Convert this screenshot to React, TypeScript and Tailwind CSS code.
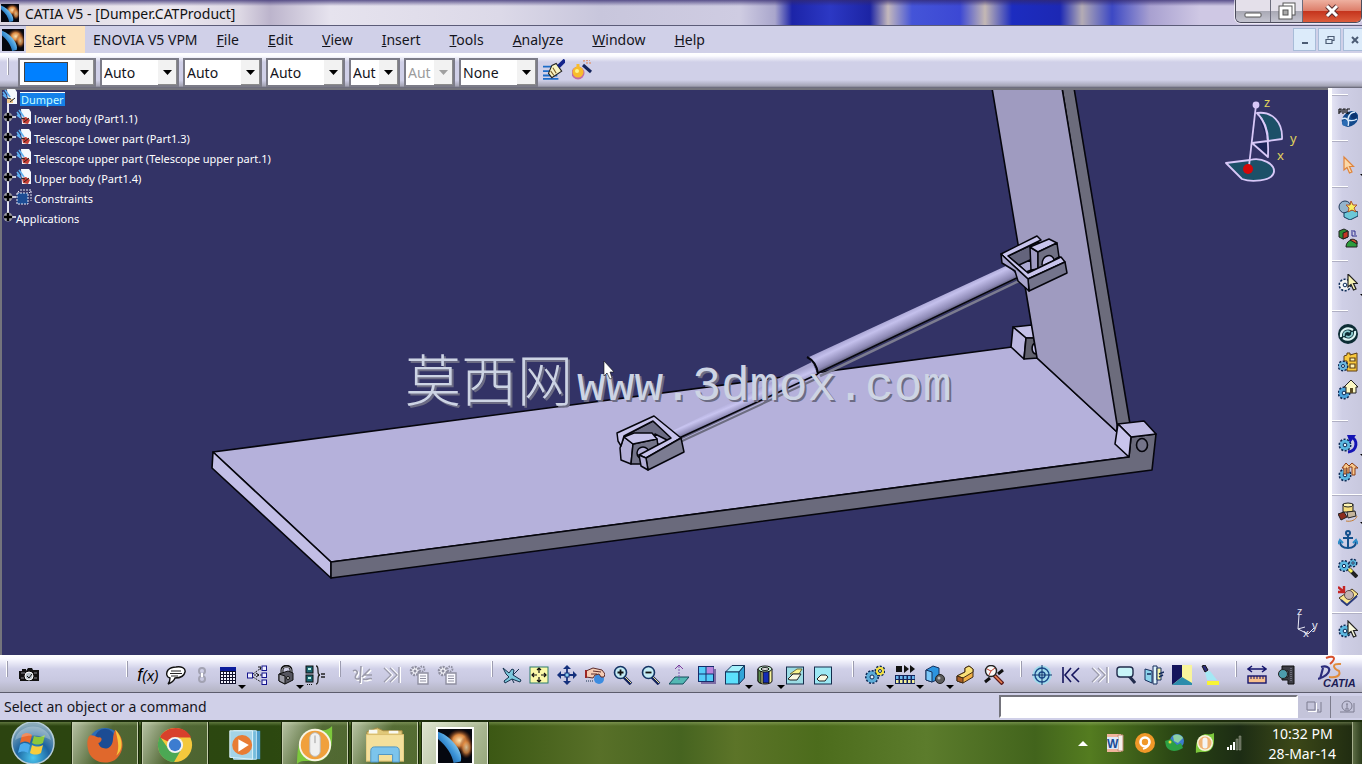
import React from "react";

interface IconProps {
    name: string;
    size?: number;
}

// All toolbar glyphs share a 20x20 grid
const gear = (cx: number, cy: number, r: number, fill: string) => (
    <g>
        <circle cx={cx} cy={cy} r={r} fill={fill} stroke="#0c2a55" strokeWidth="2" strokeDasharray="2 1.4" />
        <circle cx={cx} cy={cy} r={r - 0.5} fill={fill} />
        <circle cx={cx} cy={cy} r={r / 3} fill="#e8f4ff" stroke="#0c2a55" strokeWidth="1" />
    </g>
);

const pointer = (x: number, y: number, fill: string, stroke: string) => (
    <path
        transform={`translate(${x} ${y})`}
        d="M0 0V13L3 10.5L5.5 16L8 15L5.5 9.5H9.5Z"
        fill={fill}
        stroke={stroke}
        strokeWidth="1.2"
    />
);

const ICONS: Record<string, React.ReactNode> = {
    camera: (
        <g>
            <path d="M0 6H3V4H7V6L9 3H13L14 5H20V16H1V14H0Z" fill="#111" />
            <path d="M2 8H6M15 8H18M2 13H5M15 13H18" stroke="#8a8a92" />
            <circle cx="10" cy="11" r="4" fill="#b9c4cc" stroke="#fff" />
            <path d="M8 11L10 13L13 9" stroke="#111" fill="none" />
        </g>
    ),
    bubble: (
        <g>
            <path d="M10 2C15 1 20 3 19 7C18 12 12 13 9 13C8 16 5 18 2 19C4 17 4 15 4 13C0 12 0 8 2 5C4 3 7 2 10 2Z" fill="#fff" stroke="#111" strokeWidth="1.4" />
            <path d="M5 6H15M4 8.5H16M5 11H12" stroke="#222" />
        </g>
    ),
    chain: (
        <g fill="none" stroke="#a2a2b2" strokeWidth="2">
            <circle cx="10" cy="6" r="3" />
            <circle cx="10" cy="14" r="3" />
            <path d="M10 8V12" stroke="#fff" />
        </g>
    ),
    table: (
        <g>
            <rect x="2" y="2" width="16" height="17" fill="#10102a" />
            <rect x="2" y="2" width="16" height="4" fill="#0c1c9c" />
            {[3, 6, 9, 12, 15].map((x) =>
                [7, 10, 13, 16].map((y) => <rect key={`${x}-${y}`} x={x} y={y} width="2" height="2" fill="#f4f4ff" />)
            )}
        </g>
    ),
    tree: (
        <g fill="#eef" stroke="#14148c">
            <path d="M4 10H15M6 9L14 3M6 12L14 17" stroke="#222" strokeDasharray="2 1" />
            <path d="M11 2L14 2L13 5M9 8L12 10L9 12" stroke="#111" fill="none" />
            <rect x="0.5" y="8" width="5" height="5" />
            <rect x="15" y="1" width="4.5" height="4.5" />
            <rect x="15" y="8" width="4.5" height="4.5" />
            <rect x="15" y="15" width="4.5" height="4.5" />
        </g>
    ),
    lock: (
        <g stroke="#111">
            <path d="M6 9V5C6 0 15 0 15 5V10" fill="none" strokeWidth="3" />
            <path d="M6 9V5C6 1 15 1 15 5V10" fill="none" stroke="#b9b9c3" />
            <path d="M3 9L12 6L17 8V15L9 19L3 16Z" fill="#55555f" />
            <path d="M3 9L9 11V19L3 16Z" fill="#9b9ba6" />
            <circle cx="12" cy="13" r="1.5" fill="#ccc" />
        </g>
    ),
    formula: (
        <g>
            <rect x="1" y="1" width="7" height="7" fill="#1c6470" stroke="#111" />
            <rect x="1" y="10" width="7" height="7" fill="#1c6470" stroke="#111" />
            <path d="M3 4H6M3 13H6" stroke="#b9f0e4" strokeWidth="2" />
            <path d="M2 19.5H8" stroke="#111" strokeDasharray="1 1" />
            <path d="M11 1C15 1 11 10 15 10C11 10 15 19 11 19M16 9H20M16 12H20" fill="none" stroke="#222" strokeWidth="1.3" />
        </g>
    ),
    cut: (
        <g fill="none">
            <path d="M2 7C5 5 8 8 5 11C3 15 6 16 9 14M10 2L9 19M11 13L19 5M12 15C16 17 18 13 21 15" stroke="#fff" strokeWidth="2" />
            <path d="M1 6C4 4 7 7 4 10C2 14 5 15 8 13M9 1L8 18M10 12L18 4M11 14C15 16 17 12 20 14M12 10H20" stroke="#9a9aaa" strokeWidth="1.6" />
        </g>
    ),
    stepEndOff: (
        <g fill="none">
            <path d="M4 3L11 10L4 17M10 3L17 10L10 17M19 2V18" stroke="#fff" strokeWidth="2" />
            <path d="M3 3L10 10L3 17M9 3L16 10L9 17M18 2V18" stroke="#9a9aac" strokeWidth="1.4" />
        </g>
    ),
    stepStart: (
        <path d="M2 2V18M10 3L4 10L10 17M18 3L11 10L18 17" fill="none" stroke="#14145c" strokeWidth="1.6" />
    ),
    ghost: (
        <g>
            <circle cx="6" cy="6" r="4" fill="#f4f4fa" stroke="#8f8fa0" strokeWidth="2.5" strokeDasharray="2 1" />
            <circle cx="6" cy="6" r="1.5" fill="#8f8fa0" />
            <circle cx="13" cy="4" r="2.5" fill="none" stroke="#8f8fa0" strokeWidth="1.8" strokeDasharray="1.5 1" />
            <path d="M9 8H19V19H9Z" fill="#fafaff" stroke="#8f8fa0" strokeWidth="1.4" />
            <path d="M11 11H17M11 13.5H17M11 16H17" stroke="#8f8fa0" />
        </g>
    ),
    plane: (
        <g>
            <path d="M1 3L7 8L10 4L12 5L11 10L19 15L18 17L10 14L3 18L2 16L7 12L4 9Z" fill="#7cc8dc" stroke="#14304c" />
            <path d="M11 10L17 4M10 14L12 18" stroke="#14304c" />
        </g>
    ),
    fit: (
        <g>
            <rect x="1" y="2" width="18" height="16" fill="#fbf9a8" stroke="#2c7c6c" />
            <path d="M10 3V8M10 12V17M3 10H8M12 10H17M8 5L10 3L12 5M8 15L10 17L12 15M5 8L3 10L5 12M15 8L17 10L15 12" stroke="#111" fill="none" strokeWidth="1.2" />
        </g>
    ),
    pan: (
        <g fill="#14307c">
            <path d="M10 0L14 4H6ZM10 20L14 16H6ZM0 10L4 6V14ZM20 10L16 6V14Z" />
            <path d="M10 3V17M3 10H17" stroke="#14307c" strokeWidth="1.8" />
            <rect x="8" y="8" width="4" height="4" fill="#8cd0f0" stroke="#14307c" />
        </g>
    ),
    rotate: (
        <g>
            <circle cx="14" cy="14" r="5" fill="#3c8ce0" />
            <path d="M1 6L8 3L17 5L20 9L19 12L16 12L14 9L10 10L8 13L1 12Z" fill="#f5ccb4" stroke="#5c2c2c" />
            <path d="M8 6L16 7M6 9L12 9" stroke="#5c2c2c" />
            <path d="M1 5V13" stroke="#9c2424" strokeWidth="2" />
            <path d="M1 16H8" stroke="#14304c" strokeDasharray="1 1" />
        </g>
    ),
    zoomIn: (
        <g>
            <path d="M11 12L18 19" stroke="#14245c" strokeWidth="3.5" />
            <path d="M12 12L18 18" stroke="#f0e08c" strokeWidth="1" />
            <circle cx="7.5" cy="7.5" r="6" fill="#c4ecf4" stroke="#143464" strokeWidth="1.6" />
            <path d="M4.5 7.5H10.5M7.5 4.5V10.5" stroke="#111" strokeWidth="1.8" />
        </g>
    ),
    zoomOut: (
        <g>
            <path d="M11 12L18 19" stroke="#14245c" strokeWidth="3.5" />
            <path d="M12 12L18 18" stroke="#f0e08c" strokeWidth="1" />
            <circle cx="7.5" cy="7.5" r="6" fill="#c4ecf4" stroke="#143464" strokeWidth="1.6" />
            <path d="M4.5 7.5H10.5" stroke="#111" strokeWidth="1.8" />
        </g>
    ),
    normal: (
        <g>
            <path d="M6 12H20L14 19H0Z" fill="#54b8b4" stroke="#144c5c" />
            <path d="M10 15V1" stroke="#7c5cb0" strokeDasharray="2 1" />
            <path d="M6 4L10 0L14 4" stroke="#7c3c9c" fill="none" />
        </g>
    ),
    multi: (
        <g>
            <rect x="4" y="4" width="15" height="15" fill="#7c6ca4" />
            <rect x="1.5" y="1.5" width="15" height="15" fill="#54ccf8" stroke="#142c6c" />
            <rect x="9.5" y="2" width="7" height="7" fill="#b884dc" />
            <path d="M9 1.5V16.5M1.5 9H16.5" stroke="#142c6c" />
        </g>
    ),
    cube: (
        <g stroke="#14345c">
            <path d="M0.5 7L7 0.5H19.5L14 7Z" fill="#a4f0fc" />
            <rect x="0.5" y="7" width="13.5" height="12" fill="#5ce0fc" />
            <path d="M14 7L19.5 0.5V13L14 19Z" fill="#30a4d8" />
        </g>
    ),
    cylinder: (
        <g stroke="#111">
            <path d="M3 4V16C3 20 17 20 17 16V4Z" fill="#f8f49c" />
            <path d="M8 6H14V18H8Z" fill="#142cb4" />
            <path d="M3 4V16C4 18 6 18 6 18V5Z" fill="#5c8c4c" />
            <ellipse cx="10" cy="4" rx="7" ry="3" fill="#c4f0d4" />
            <ellipse cx="10" cy="4" rx="4" ry="1.4" fill="#fff" />
        </g>
    ),
    hide: (
        <g>
            <rect x="1.5" y="2" width="17" height="17" fill="#9cdce4" stroke="#142c4c" />
            <path d="M5 9L12 4H17L14 9Z" fill="#f8f48c" stroke="#6c6c3c" />
            <path d="M3 14L8 9H16L12 15H5Z" fill="#f8f8e0" stroke="#222" />
        </g>
    ),
    swap: (
        <g>
            <rect x="1.5" y="2" width="17" height="17" fill="#9ce8f4" stroke="#142c4c" />
            <path d="M4 14L8 10H13L15 12L12 16H6Z" fill="#f8f8e0" stroke="#222" />
        </g>
    ),
    gears: (
        <g>
            {gear(7, 12, 6, "#5cacd8")}
            {gear(15, 6, 4.5, "#f4e044")}
        </g>
    ),
    player: (
        <g fill="#111">
            <rect x="1" y="1" width="6" height="6" />
            <path d="M9 0L14 4L9 8ZM15 0L20 4L15 8Z" />
            <rect x="0" y="10" width="20" height="9" fill="#14245c" />
            {[1, 5, 9, 13, 17].map((x) => (
                <g key={x}>
                    <rect x={x} y="11" width="2.5" height="3" fill="#6cb8f0" />
                    <rect x={x} y="15" width="2.5" height="3" fill="#f4f09c" />
                </g>
            ))}
        </g>
    ),
    boxes: (
        <g stroke="#14305c">
            <path d="M1 5L8 1L14 3V14L7 17L1 15Z" fill="#2c94e0" />
            <path d="M1 5L7 7V17L1 15Z" fill="#7cc8f8" />
            <circle cx="15" cy="14" r="4.5" fill="#5c5c5c" stroke="#222" />
            <circle cx="14" cy="13" r="1.5" fill="#bbb" stroke="none" />
        </g>
    ),
    clip: (
        <g stroke="#422c14">
            <path d="M2 11L10 7V3L14 1L18 4V12L8 18L2 16Z" fill="#f0b048" />
            <path d="M2 11L8 13L18 7V4L14 1L10 3V7Z" fill="#f8e078" />
            <path d="M8 13V18L2 16V11Z" fill="#a85c24" />
        </g>
    ),
    clash: (
        <g>
            <path d="M9 9L19 19" stroke="#5c1c1c" strokeWidth="4" />
            <path d="M10 10L18 18" stroke="#f08454" strokeWidth="1.6" />
            <circle cx="7" cy="6" r="5.5" fill="#f8f8f8" stroke="#222" strokeWidth="1.4" />
            <path d="M3 4L7 6L11 3M5 10L7 6" stroke="#c43c2c" fill="none" />
            <path d="M14 9L19 5M1 17L6 13" stroke="#111" strokeWidth="3" />
        </g>
    ),
    target: (
        <g fill="none">
            <circle cx="10" cy="10" r="9.5" fill="#a4dcec" />
            <circle cx="10" cy="10" r="7" stroke="#1c4c8c" strokeWidth="1.4" />
            <circle cx="10" cy="10" r="3" stroke="#1c4c8c" strokeWidth="1.4" />
            <path d="M10 0V20M0 10H20" stroke="#14346c" />
        </g>
    ),
    magnify: (
        <g>
            <path d="M13 11L19 18" stroke="#222c4c" strokeWidth="3" />
            <rect x="1" y="2" width="16" height="10" rx="3" fill="#c8f4f8" stroke="#222c4c" strokeWidth="1.4" />
        </g>
    ),
    book: (
        <g stroke="#142c5c">
            <path d="M1 4L8 6V18L1 15Z" fill="#8cd4ec" />
            <path d="M9 1H13V19H9Z" fill="#e0f4fc" />
            <path d="M13 3H17V15H13Z" fill="#f8f8a8" />
            <path d="M3 9H7M15 9L20 7M15 12L19 10" strokeWidth="1.6" />
        </g>
    ),
    room: (
        <g>
            <rect width="20" height="20" fill="#f8f49c" />
            <path d="M0 0H10V12L0 20Z" fill="#14145c" />
            <path d="M0 20L10 12L20 18V20Z" fill="#2c8cac" />
        </g>
    ),
    spot: (
        <g>
            <path d="M5 7L10 6L17 15H7Z" fill="#a4e8f4" />
            <path d="M2 1L5 0L8 5L5 7Z" fill="#2c2c7c" stroke="#111" />
            <rect x="7" y="16" width="12" height="4" fill="#f8f434" />
        </g>
    ),
    measure: (
        <g>
            <path d="M1 4H19M5 1L1 4L5 7M15 1L19 4L15 7" fill="none" stroke="#14146c" strokeWidth="1.5" />
            <rect x="1" y="11" width="18" height="7" fill="#f8c08c" stroke="#14146c" strokeWidth="1.4" />
            <path d="M4 11V14M7 11V14M10 11V14M13 11V14M16 11V14" stroke="#14146c" />
        </g>
    ),
    caliper: (
        <g>
            <path d="M6 1H18V19H12V15H6V12H12V6H6Z" fill="#3c3c44" stroke="#111" />
            <circle cx="7" cy="9" r="4.5" fill="#4c9cac" stroke="#222" />
            <path d="M15 3V17" stroke="#9c9cac" strokeDasharray="1 1" />
        </g>
    ),
    knot: (
        <g>
            <ellipse cx="12" cy="11" rx="9" ry="7" transform="rotate(-40 12 11)" fill="#134a8c" />
            <circle cx="7" cy="15" r="3" fill="#2c6cb4" />
            <circle cx="16" cy="8" r="3" fill="#0c3470" />
            <path d="M4 11C8 9 12 12 10 18M10 11C11 6 14 4 17 4M10 12C13 13 16 13 19 11" fill="none" stroke="#dcecfc" strokeWidth="1.4" />
            <path d="M1 1V6M1 1H3V4H1M5 1V6M5 1H7V5M9 1V6M9 1H12M9 5H12" fill="none" stroke="#111" strokeWidth="1.2" />
        </g>
    ),
    arrow: pointer(6, 3, "#fbd8a8", "#e0843c"),
    newPart: (
        <g>
            <circle cx="7" cy="7" r="6" fill="#94b4cc" stroke="#243c5c" />
            <path d="M6 13L14 10L20 12V16L12 20L6 17Z" fill="#6cc8d8" stroke="#143c5c" />
            <path d="M13 1L15 5L19 5L16 8L18 12L14 10L10 12L11 8L8 5L12 5Z" fill="#f8f060" stroke="#b0542c" />
        </g>
    ),
    replace: (
        <g stroke="#222">
            <path d="M1 3L6 1L10 3V9L5 11L1 9Z" fill="#2c8c34" />
            <path d="M5 5L10 3V9L5 11Z" fill="#c43424" />
            <path d="M8 19C8 13 14 10 19 13V19Z" fill="#2c9c3c" />
            <path d="M12 12C15 10 19 12 19 16Z" fill="#d8502c" />
            <path d="M13 3H17V7M19 8H14V4" stroke="#2c2c8c" fill="none" />
        </g>
    ),
    gearPointer: (
        <g>
            {gear(7, 11, 5.5, "#f4f4f4")}
            {pointer(10, 0, "#f8f4b4", "#222")}
        </g>
    ),
    gearPointerBlue: (
        <g>
            {gear(7, 11, 5.5, "#5cb8e0")}
            {pointer(10, 1, "#f8f8dc", "#222")}
        </g>
    ),
    swirl: (
        <g fill="none">
            <circle cx="10" cy="10" r="10" fill="#0c2c34" />
            <path d="M3 13C2 6 9 2 15 6" stroke="#dcf4f4" strokeWidth="2.2" />
            <path d="M17 7C18 14 11 18 5 14" stroke="#dcf4f4" strokeWidth="2.2" />
            <path d="M6 12C5 8 9 6 12 8M14 8C15 12 11 14 8 12" stroke="#8cccd0" strokeWidth="1.8" />
        </g>
    ),
    catalog: (
        <g>
            <path d="M6 4L9 3V1H12V3L19 1V19H9V9H6Z" fill="#f8c83c" stroke="#5c3c14" />
            <path d="M12 6H17V9H12ZM12 12H17V16H12Z" fill="#fff4b4" stroke="#5c3c14" strokeWidth="1.2" />
            {gear(5, 14, 4.5, "#6cb8e0")}
        </g>
    ),
    home: (
        <g>
            {gear(6, 13, 5.5, "#4ca4dc")}
            <path d="M6 7L13 0L20 7H18V13H8V7Z" fill="#fcf8c4" stroke="#222" />
            <rect x="12" y="8" width="3" height="5" fill="#5c4c24" />
        </g>
    ),
    gearTurn: (
        <g>
            {gear(7, 11, 5.5, "#5cb8e0")}
            <path d="M13 3C20 5 20 17 10 18" fill="none" stroke="#1414b4" strokeWidth="3" />
            <path d="M9 1H18L12 9Z" fill="#1414b4" />
        </g>
    ),
    gearMove: (
        <g>
            {gear(7, 13, 5.5, "#5cb8e0")}
            <path d="M6 12V6H4L8 1L11 4L14 1L20 6H17V13H14V5H11V11H9V6H8V12Z" fill="#f8c88c" stroke="#8c3c14" />
        </g>
    ),
    coincide: (
        <g stroke="#222">
            <path d="M5 2H15V10H5Z" fill="#f4dc7c" />
            <ellipse cx="10" cy="3" rx="5" ry="2" fill="#fcf4b4" />
            <path d="M0 12L6 10L9 15L3 18Z" fill="#8c2c1c" />
            <path d="M9 10L17 9L18 14L10 16Z" fill="#c4b49c" />
            <path d="M8 19C13 20 18 18 19 14" fill="none" stroke="#c47c34" />
        </g>
    ),
    anchor: (
        <g fill="none" stroke="#14508c" strokeWidth="2">
            <circle cx="10" cy="3" r="2" />
            <path d="M10 5V18M5 8H15M2 11C2 17 7 18 10 18C13 18 18 17 18 11" />
            <path d="M0 14L2 10L5 13M15 13L18 10L20 14" stroke="#2c8cc8" />
        </g>
    ),
    gearWand: (
        <g>
            {gear(6, 8, 5, "#5cb8e0")}
            {gear(15, 5, 3.5, "#5cb8e0")}
            <path d="M11 11L19 19" stroke="#222" strokeWidth="4" />
            <path d="M11 11L14 14" stroke="#f8f45c" strokeWidth="3" />
        </g>
    ),
    reuse: (
        <g>
            <path d="M1 12L14 3L20 8L9 19Z" fill="#f8e48c" stroke="#4c3c1c" />
            <path d="M3 14L9 19L19 10" stroke="#2c3c7c" fill="none" strokeWidth="2" />
            <circle cx="11" cy="9" r="4.5" fill="#c4b4b4" stroke="#5c4c4c" />
            <path d="M0 1L6 6M6 0V6H0" stroke="#c42424" strokeWidth="2.4" fill="none" />
        </g>
    ),
    painter: (
        <g>
            <path d="M0 7H8M0 11H7M0 15H13M0 18H14" stroke="#1c6cc8" strokeWidth="1.6" />
            <path d="M8 6L12 4L17 11L8 17L5 13Z" fill="#f8f4c4" stroke="#222" />
            <path d="M9 8L12 13M7 11L10 15" stroke="#7c5c24" />
            <path d="M14 7L20 1" stroke="#14248c" strokeWidth="3.5" />
        </g>
    ),
    wizard: (
        <g>
            <circle cx="6" cy="13" r="6.5" fill="#c46ca4" />
            <circle cx="6" cy="12" r="5.5" fill="#f8bc2c" />
            <path d="M6 4V10" stroke="#f8bc2c" strokeWidth="3" />
            <circle cx="5" cy="11" r="2" fill="#fcf48c" />
            <path d="M11 5L19 12" stroke="#14245c" strokeWidth="3" />
            <path d="M11 1L18 0M14 3H19" stroke="#e09c7c" strokeDasharray="2 1" strokeWidth="1.5" />
        </g>
    ),
};

const Icon: React.FC<IconProps> = ({ name, size = 20 }) => (
    <svg viewBox="0 0 20 20" width={size} height={size} aria-hidden="true" className="shrink-0">
        {ICONS[name]}
    </svg>
);

const CatiaIcon: React.FC<{ className: string }> = ({ className }) => (
    <svg viewBox="0 0 24 24" className={className} aria-hidden="true">
        <defs>
            <linearGradient id="comet" x1="0" y1="1" x2="1" y2="0">
                <stop offset="0.1" stopColor="#0c3c78" />
                <stop offset="0.5" stopColor="#3c94d8" />
                <stop offset="0.8" stopColor="#a4dcf4" />
            </linearGradient>
            <radialGradient id="flare">
                <stop offset="0" stopColor="#fce4b4" />
                <stop offset="0.5" stopColor="#dc8840" />
                <stop offset="1" stopColor="#6c280c" stopOpacity="0" />
            </radialGradient>
        </defs>
        <rect width="24" height="24" fill="#05070f" />
        <ellipse cx="15" cy="8" rx="9" ry="8" fill="url(#flare)" />
        <ellipse cx="20" cy="13" rx="5" ry="8" fill="url(#flare)" opacity="0.8" />
        <path d="M0 2C6 4 10 8 13 12C16 16 17 20 16 23L11 24C10 18 6 12 0 7Z" fill="url(#comet)" />
    </svg>
);

interface Tool {
    icon: string;
    label: string;
    width?: string;
    drop?: boolean;
}

interface ToolGroup {
    size: string;
    tools: Tool[];
}

const BOTTOM_GROUPS: ToolGroup[] = [
    { size: "w-[120px]", tools: [{ icon: "camera", label: "Capture", width: "w-[30px]" }] },
    {
        size: "w-[213px]",
        tools: [
            { icon: "fx", label: "Formula" },
            { icon: "bubble", label: "Comment", width: "w-7" },
            { icon: "chain", label: "Link", width: "w-6" },
            { icon: "table", label: "Design table", drop: true },
            { icon: "tree", label: "Relations", width: "w-[30px]" },
            { icon: "lock", label: "Lock", drop: true },
            { icon: "formula", label: "Equivalent dimensions", width: "w-[30px]" },
        ],
    },
    {
        size: "w-[152px]",
        tools: [
            { icon: "cut", label: "Cut link", width: "w-[30px]" },
            { icon: "stepEndOff", label: "Last" },
            { icon: "ghost", label: "Publish" },
            { icon: "ghost", label: "Publish all" },
        ],
    },
    {
        size: "w-[361px]",
        tools: [
            { icon: "plane", label: "Fly mode", width: "w-[26px]" },
            { icon: "fit", label: "Fit all in" },
            { icon: "pan", label: "Pan" },
            { icon: "rotate", label: "Rotate" },
            { icon: "zoomIn", label: "Zoom in" },
            { icon: "zoomOut", label: "Zoom out" },
            { icon: "normal", label: "Normal view" },
            { icon: "multi", label: "Multi-view" },
            { icon: "cube", label: "Isometric view", drop: true },
            { icon: "cylinder", label: "Shading", width: "w-8", drop: true },
            { icon: "hide", label: "Hide/Show" },
            { icon: "swap", label: "Swap visible space" },
        ],
    },
    {
        size: "w-[168px]",
        tools: [
            { icon: "gears", label: "Simulation", width: "w-[30px]", drop: true },
            { icon: "player", label: "Player", width: "w-[30px]", drop: true },
            { icon: "boxes", label: "Scene", width: "w-[30px]", drop: true },
            { icon: "clip", label: "Sectioning", width: "w-[30px]" },
            { icon: "clash", label: "Clash" },
        ],
    },
    {
        size: "w-[215px]",
        tools: [
            { icon: "target", label: "Look at" },
            { icon: "stepStart", label: "Previous view", width: "w-[30px]" },
            { icon: "stepEndOff", label: "Next view", width: "w-[26px]" },
            { icon: "magnify", label: "Magnifier" },
            { icon: "book", label: "Depth effect" },
            { icon: "room", label: "Ground" },
            { icon: "spot", label: "Lighting" },
        ],
    },
    {
        size: "w-[80px]",
        tools: [
            { icon: "measure", label: "Measure between" },
            { icon: "caliper", label: "Measure item", width: "w-[30px]" },
        ],
    },
];

const SIDE_GROUPS: ToolGroup[] = [
    { size: "pb-2", tools: [{ icon: "knot", label: "Product structure" }] },
    { size: "pb-2", tools: [{ icon: "arrow", label: "Select", drop: true }] },
    {
        size: "pb-2",
        tools: [
            { icon: "newPart", label: "Generate numbering" },
            { icon: "replace", label: "Replace component" },
        ],
    },
    { size: "pb-3", tools: [{ icon: "gearPointer", label: "Manipulate", drop: true }] },
    {
        size: "pb-4",
        tools: [
            { icon: "swirl", label: "Update all" },
            { icon: "catalog", label: "Catalog browser" },
            { icon: "home", label: "Workbench" },
        ],
    },
    {
        size: "pb-2",
        tools: [
            { icon: "gearTurn", label: "Rotate component", drop: true },
            { icon: "gearMove", label: "Explode" },
        ],
    },
    {
        size: "pb-0.5",
        tools: [
            { icon: "coincide", label: "Coincidence", drop: true },
            { icon: "anchor", label: "Fix component" },
            { icon: "gearWand", label: "Quick constraint" },
            { icon: "reuse", label: "Reuse pattern" },
        ],
    },
    { size: "pb-0", tools: [{ icon: "gearPointerBlue", label: "Smart move" }] },
];

const ToolButton: React.FC<Tool> = ({ icon, label, width = "w-7", drop }) => (
    <button type="button" aria-label={label} className={`relative flex h-7 shrink-0 items-center justify-center ${width}`}>
        {icon === "fx" ? (
            <span className="font-['Liberation_Sans',sans-serif] text-lg italic leading-5 text-black">
                f<span className="text-sm">(x)</span>
            </span>
        ) : (
            <Icon name={icon} />
        )}
        {drop && (
            <svg viewBox="0 0 8 4" className="absolute -right-1 bottom-0 h-1 w-2" aria-hidden="true">
                <path d="M0 0H8L4 4Z" fill="#000" />
            </svg>
        )}
    </button>
);

const MENU = ["File", "Edit", "View", "Insert", "Tools", "Analyze", "Window", "Help"];

const COMBOS = [
    { label: "Line colour", value: "Auto", width: "w-[79px]", off: false },
    { label: "Transparency", value: "Auto", width: "w-[79px]", off: false },
    { label: "Line weight", value: "Auto", width: "w-[79px]", off: false },
    { label: "Line type", value: "Aut", width: "w-[51px]", off: false },
    { label: "Point symbol", value: "Aut", width: "w-[51px]", off: true },
    { label: "Layer", value: "None", width: "w-[79px]", off: false },
];

const ComboArrow: React.FC<{ off?: boolean }> = ({ off }) => (
    <span className="pointer-events-none absolute bottom-0 right-0 top-0 flex w-[19px] items-center justify-center border-b border-r border-[#8c8c8c] bg-[#f2f2f2]">
        <svg viewBox="0 0 9 5" className="h-[5px] w-[9px]" aria-hidden="true">
            <path d="M0 0H9L4.5 5Z" fill={off ? "#a0a0a0" : "#000"} />
        </svg>
    </span>
);

const TitleBar = () => (
    <header className="flex h-[26px] shrink-0 items-stretch border-b border-[#5c5c78] bg-[linear-gradient(180deg,rgba(50,40,110,0.75)_0,rgba(255,255,255,0)_6px),linear-gradient(90deg,#dcd6e0_0,#ece8f0_160px,#ddd8e4_240px,#bcb4cc_270px,#e6e3ee_330px,#dcd9e8_500px,#c8c6dc_600px,#cfcce2_740px,#a9a6cc_775px,#1c24a8_792px,#2c38c4_830px,#1c24a4_870px,#c4b8bc_888px,#4454d8_912px,#3c48d4_960px,#c4b8b4_985px,#1c2cc0_1012px,#1c28b4_1060px,#b4acb4_1082px,#3c48c4_1112px,#a8a0d0_1150px,#cfc8e4_1200px)]">
        <CatiaIcon className="ml-px mt-1 size-[18px]" />
        <h1 className="ml-1.5 mt-1 flex-1 text-sm leading-5 text-[#111]">CATIA V5 - [Dumper.CATProduct]</h1>
        <div className="flex h-[23px] overflow-hidden rounded-b-md border border-t-0 border-[#4c4c5c] shadow-[0_0_0_1px_rgba(255,255,255,0.6)]">
            <button type="button" aria-label="Minimize" className="flex w-[35px] items-center justify-center border-r border-[#6c6c7c] bg-[linear-gradient(#e4e0ea_50%,#a8a8b4_50%,#c4c4d0)]">
                <svg viewBox="0 0 18 18" className="size-[18px]" aria-hidden="true">
                    <rect x="1" y="11" width="16" height="4" rx="1" fill="#fff" stroke="#555" />
                </svg>
            </button>
            <button type="button" aria-label="Restore" className="flex w-8 items-center justify-center border-r border-[#6c6c7c] bg-[linear-gradient(#e4e0ea_50%,#a8a8b4_50%,#c4c4d0)]">
                <svg viewBox="0 0 18 18" className="size-[18px]" aria-hidden="true">
                    <rect x="5" y="1" width="12" height="12" fill="#fff" stroke="#555" />
                    <rect x="1" y="4" width="13" height="13" fill="#fff" stroke="#555" />
                    <rect x="5" y="8" width="5" height="5" fill="#aaa" stroke="#555" />
                </svg>
            </button>
            <button type="button" aria-label="Close" className="flex w-[58px] items-center justify-center bg-[linear-gradient(#eeb0a0_0,#dc7c68_50%,#c4331c_50%,#dc5c3c)]">
                <svg viewBox="0 0 18 18" className="size-[18px]" aria-hidden="true">
                    <path d="M4 4L14 14M14 4L4 14" stroke="#5c3030" strokeWidth="5" />
                    <path d="M4 4L14 14M14 4L4 14" stroke="#fff" strokeWidth="3" />
                </svg>
            </button>
        </div>
    </header>
);

const MenuBar = () => (
    <nav className="flex h-[27px] shrink-0 items-stretch bg-[#d0d0e8] text-sm leading-5 text-[#14141c]">
        <CatiaIcon className="ml-0.5 mt-[3px] size-[22px]" />
        <button type="button" className="ml-0.5 w-[59px] bg-[#fce2bc] pl-2 text-left">
            <u>S</u>tart
        </button>
        <button type="button" className="pl-2 pr-[5px]">ENOVIA V5 VPM</button>
        <div className="flex gap-px">
            {MENU.map((item) => (
                <button key={item} type="button" className="px-[14px]">
                    <u>{item[0]}</u>
                    {item.slice(1)}
                </button>
            ))}
        </div>
        <div className="-mr-1 ml-auto flex gap-0.5 pt-0.5">
            {["Minimize", "Restore", "Close"].map((label) => (
                <button key={label} type="button" aria-label={`${label} document`} className="flex h-[23px] w-[23px] items-center justify-center border border-[#a8bcd8] bg-[#dcebfa]">
                    <svg viewBox="0 0 10 10" className="size-2.5" fill="none" stroke="#4c5c74" aria-hidden="true">
                        {label === "Minimize" && <path d="M2 8H8" strokeWidth="2" />}
                        {label === "Restore" && <path d="M3 3.5V1.5H9V5.5H7M1 4.5H7V8.5H1Z" strokeWidth="1.2" />}
                        {label === "Close" && <path d="M2 2L8 8M8 2L2 8" strokeWidth="2" />}
                    </svg>
                </button>
            ))}
        </div>
    </nav>
);

const PropertiesBar = () => (
    <div className="flex h-[35px] shrink-0 items-start gap-1 bg-[linear-gradient(#fff_0,#fbfbff_3px,#d0d0e8_9px,#d0d0e8_27px,#a4a4b4_33px,#5c5c6c_35px)] pl-[7px] pt-[5px] text-sm">
        <span className="mr-1.5 h-[17px] w-px bg-white shadow-[1px_0_0_#9c9cac]" />
        <div className="relative h-[29px] w-[78px] border-2 border-[#7c7c88] bg-white">
            <select aria-label="Fill colour" className="h-full w-full appearance-none text-transparent outline-none" defaultValue="blue">
                <option value="blue"></option>
            </select>
            <span className="pointer-events-none absolute left-1 top-0.5 h-5 w-11 border border-[#444] bg-[#0080ff]" />
            <ComboArrow />
        </div>
        {COMBOS.map((combo) => (
            <div key={combo.label} className={`relative h-[29px] shrink-0 border-2 border-[#7c7c88] bg-white ${combo.width}`}>
                <select
                    aria-label={combo.label}
                    disabled={combo.off}
                    className={`h-full w-full appearance-none pl-0.5 outline-none ${combo.off ? "text-[#9c9c9c]" : "text-[#14141c]"}`}
                >
                    <option>{combo.value}</option>
                </select>
                <ComboArrow off={combo.off} />
            </div>
        ))}
        <button type="button" aria-label="Painter" className="flex h-6 w-6 items-center justify-center">
            <Icon name="painter" size={22} />
        </button>
        <button type="button" aria-label="Wizard" className="flex h-6 w-6 items-center justify-center">
            <Icon name="wizard" />
        </button>
    </div>
);

const TREE = [
    { label: "lower body (Part1.1)", kind: "part" },
    { label: "Telescope Lower part (Part1.3)", kind: "part" },
    { label: "Telescope upper part (Telescope upper part.1)", kind: "part" },
    { label: "Upper body (Part1.4)", kind: "part" },
    { label: "Constraints", kind: "constraints" },
    { label: "Applications", kind: "none" },
];

const PartIcon: React.FC<{ kind: string }> = ({ kind }) => (
    <svg viewBox="0 0 16 16" className="mb-1 size-4 shrink-0" aria-hidden="true">
        {kind === "constraints" ? (
            <g fill="none" stroke="#e8e8f4" strokeDasharray="2 1">
                <rect x="1" y="4" width="11" height="11" fill="#1c4c94" />
                <path d="M4 1H15V12M2 2L4 4M13 4L15 2" />
            </g>
        ) : (
            <g>
                <path d="M5 0H13L15 3V15H6Z" fill="#f4f8fc" />
                <path d="M1 3L4 7M3 1L8 8M1 6L5 9" stroke="#5cb0f0" strokeWidth="1.6" />
                {kind === "root" ? (
                    <path d="M5 10H11V14H5Z" fill="#f0c88c" />
                ) : (
                    <path d="M6 9L10 8L14 11L12 15L7 14Z" fill="#c43c34" />
                )}
                <path d="M5 9L9 10M8 13L13 9" stroke="#222" />
            </g>
        )}
    </svg>
);

const SpecTree = () => (
    <div className="absolute left-0 top-0 -mt-px text-[11px] leading-5 text-white">
        <span className="absolute left-[5px] top-3.5 h-[114px] w-0.5 bg-[#e4e4f0]" />
        <div className="flex h-5 items-center">
            <PartIcon kind="root" />
            <span className="ml-0.5 h-[14px] border-t border-white bg-[#1480e8] px-px leading-[14px] text-[#c4fcff]">Dumper</span>
        </div>
        <ul>
            {TREE.map((node) => (
                <li key={node.label} className="flex h-5 items-center">
                    <svg viewBox="0 0 14 14" className="relative mb-1 h-3.5 w-3.5 shrink-0" aria-hidden="true">
                        <path d="M10 7H14" stroke="#fff" strokeWidth="1.5" />
                        <circle cx="6" cy="7" r="4.5" fill="#9c9ca4" />
                        <path d="M2 7H10M6 3V11" stroke="#000" strokeWidth="2.4" />
                    </svg>
                    {node.kind !== "none" && <PartIcon kind={node.kind} />}
                    <span className={`whitespace-nowrap ${node.kind !== "none" ? "ml-0.5" : ""}`}>{node.label}</span>
                </li>
            ))}
        </ul>
    </div>
);

const Model = () => (
    <svg viewBox="2 90 1326 565" preserveAspectRatio="xMidYMid slice" className="block h-full w-full" role="img" aria-label="Dumper assembly">
        <defs>
            <linearGradient id="rod" gradientUnits="userSpaceOnUse" x1="905" y1="309" x2="914" y2="328">
                <stop offset="0" stopColor="#9c98c8" />
                <stop offset="0.35" stopColor="#c4c0ec" />
                <stop offset="0.8" stopColor="#8c88b4" />
                <stop offset="1" stopColor="#54546c" />
            </linearGradient>
            <linearGradient id="rodThin" gradientUnits="userSpaceOnUse" x1="740" y1="396" x2="746" y2="410">
                <stop offset="0" stopColor="#a8a4d0" />
                <stop offset="0.4" stopColor="#c8c4f0" />
                <stop offset="0.8" stopColor="#9490bc" />
                <stop offset="1" stopColor="#646480" />
            </linearGradient>
        </defs>
        <g stroke="#05050c" strokeWidth="1.6" strokeLinejoin="round">
            <path d="M213 452L1012 347L1037 358L1117 432L1129 457L331 562Z" fill="#b5b1db" />
            <path d="M213 452L331 562V578L212 468Z" fill="#c2bee6" />
            <path d="M1013 327L1032 325L1035 338H1026Z" fill="#c4c0e8" />
            <path d="M1013 327L1026 338L1024 359L1011 347Z" fill="#bcb8e0" />
            <path d="M1026 338H1034L1038 358L1024 359Z" fill="#62626e" />
            <path d="M1035 343C1031 345 1031 353 1036 354" fill="#c4c0e8" />
            <path d="M1062 88L1074 88L1130 424L1117 432Z" fill="#6c6c7c" />
            <path d="M992 88H1062L1084 220L1117 424V432L1037 358Z" fill="#9f9bc0" />
            <path d="M1131 437L1156 434L1152 470L331 578V562L1129 457Z" fill="#6a6a7c" />
            <path d="M1118 424L1144 421L1156 434L1131 437Z" fill="#c0bce4" />
            <path d="M1118 424L1131 437L1129 457L1115 444Z" fill="#c8c4ec" />
            <ellipse cx="1142" cy="445" rx="5.5" ry="6.5" fill="#74748a" />
        </g>
        <path d="M670 432L812 362L818 375L680 440Z" fill="url(#rodThin)" />
        <path d="M677 439L818 374" stroke="#05050c" strokeWidth="1.6" />
        <path d="M680 442L818 378" stroke="#6c6c80" strokeWidth="2" />
        <path d="M809 357L1008 265L1019 278L818 374Z" fill="url(#rod)" />
        <path d="M818 373L1019 277" stroke="#05050c" strokeWidth="1.6" />
        <path d="M820 376L1019 281" stroke="#7c7c90" strokeWidth="2.5" />
        <path d="M807 357C813 360 817 366 818 374" fill="none" stroke="#05050c" strokeWidth="2" />
        <g stroke="#05050c" strokeWidth="1.5" strokeLinejoin="round">
            <path d="M1008 256L1038 242L1061 258L1028 273Z" fill="#64647c" />
            <path d="M1019 265L1030 260L1034 269L1026 272Z" fill="#aca8d0" />
            <path d="M1030 247L1038 252V269L1031 270Z" fill="#a09cc4" />
            <path d="M1030 247L1049 239L1057 243L1038 252Z" fill="#c8c4ec" />
            <path d="M1038 252L1057 243L1059 257L1038 269Z" fill="#707084" />
            <path d="M1042 265C1042 254 1053 253 1054 260" fill="#c4c0e8" />
            <path d="M1001 254L1037 236L1041 240L1008 256L1028 273L1061 257L1065 262L1028 279Z" fill="#c8c4ec" />
            <path d="M1028 279L1065 262L1067 273L1029 291Z" fill="#74748c" />
            <path d="M1001 254L1028 279L1029 291L1018 281L1015 271L1002 263Z" fill="#a8a4cc" />
            <path d="M622 437L653 421L672 438L646 452Z" fill="#6c6c84" />
            <path d="M655 434L667 440L661 446L653 441Z" fill="#c0bce4" />
            <path d="M624 437L633 444L631 464L621 460L620 448Z" fill="#b4b0d8" />
            <path d="M633 444L657 439L658 446L644 464L631 464Z" fill="#74748a" />
            <path d="M624 437L634 433L652 433L657 439L633 444Z" fill="#c8c4ec" />
            <circle cx="643" cy="453" r="6" fill="#b4b0d8" />
            <path d="M617 433L654 416L681 438L646 458L639 455L671 438L653 421L624 436L621 446L618 441Z" fill="#c8c4ec" />
            <path d="M646 458L681 438L684 452L648 470Z" fill="#7c7c92" />
            <path d="M639 455L646 458L648 470L641 466Z" fill="#b4b0d8" />
        </g>
        <g fill="#6c6c84">
            <text x="407" y="403" className="font-['Noto_Sans_CJK_SC',sans-serif] text-[56px] font-light">莫西网</text>
            <text x="579" y="402" className="font-['Liberation_Mono',monospace] text-[48px]">www.3dmox.com</text>
        </g>
        <g fill="#cdd4e4">
            <text x="405" y="401" className="font-['Noto_Sans_CJK_SC',sans-serif] text-[56px] font-light">莫西网</text>
            <text x="577" y="400" className="font-['Liberation_Mono',monospace] text-[48px]">www.3dmox.com</text>
        </g>
        <path d="M604 361V376L607 373L610 379L612 378L610 372H614Z" fill="#fff" stroke="#111" strokeWidth="0.6" />
        <g stroke="#d8c8f8" strokeWidth="1.8" fill="#1c5068" strokeLinejoin="round">
            <path d="M1226 163L1250 160C1262 157 1275 164 1274 172C1272 182 1250 182 1242 179Z" />
            <path d="M1257 113C1272 111 1283 122 1282 139L1268 141C1268 130 1264 120 1257 113Z" />
            <path d="M1257 113C1265 122 1269 132 1268 157L1252 143L1268 141" fill="#1c2458" />
            <path d="M1256 105L1249 166" fill="none" />
            <circle cx="1256" cy="105" r="2.5" fill="#d8c8f8" />
            <circle cx="1248" cy="169" r="5" fill="#d40808" stroke="none" />
        </g>
        <g fill="#e0d45c" className="font-['Noto_Sans',sans-serif] text-[13px]">
            <text x="1264" y="107">z</text>
            <text x="1290" y="143">y</text>
            <text x="1277" y="160">x</text>
        </g>
        <path d="M1299 615L1298 629L1308 634L1314 628M1298 629L1305 627" stroke="#e8e8f4" fill="none" />
        <g fill="#e8e8f4" className="font-['Noto_Sans',sans-serif] text-[11px]">
            <text x="1297" y="615">z</text>
            <text x="1312" y="629">y</text>
            <text x="1303" y="637">x</text>
        </g>
    </svg>
);

const SideBar = () => (
    <aside className="flex w-[34px] shrink-0 flex-col overflow-hidden border-l-4 border-white bg-[linear-gradient(90deg,#e4e4f4,#cfcfe6_10px,#c8c8de)] pt-1.5">
        {SIDE_GROUPS.map((group, i) => (
            <div key={i} className={`flex shrink-0 flex-col ${group.size}`}>
                <span className={`h-0.5 border-b border-[#b0b0c4] bg-white ${i > 5 ? "mb-0.5 w-full" : "mb-2 w-4"}`} />
                {group.tools.map((tool) => (
                    <ToolButton key={tool.label} {...tool} width="w-8" />
                ))}
            </div>
        ))}
    </aside>
);

const BottomBar = () => (
    <div className="flex h-[38px] shrink-0 items-start overflow-hidden border-b border-[#5c5c6c] bg-[linear-gradient(#fff_0,#f8f8ff_4px,#d0d0e8_14px,#c8c8e0_26px,#b4b4c4_37px)] pl-1.5 pt-1.5">
        {BOTTOM_GROUPS.map((group, i) => (
            <div key={i} className={`flex shrink-0 ${group.size}`}>
                <span className="mr-1.5 h-4 w-0.5 shrink-0 border-r border-[#9c9cb0] bg-white" />
                {group.tools.map((tool) => (
                    <ToolButton key={tool.label} {...tool} />
                ))}
            </div>
        ))}
        <svg viewBox="0 0 42 34" className="-mt-1.5 ml-auto mr-0.5 h-[34px] w-[42px] shrink-0" role="img" aria-label="DS CATIA">
            <path d="M8 3C16 0 19 3 12 9" fill="none" stroke="#d8502c" strokeWidth="2" />
            <path d="M3 12C14 9 15 19 0 24M5 13L2 24" fill="none" stroke="#2c2c7c" strokeWidth="2.2" />
            <path d="M23 9C12 8 16 14 21 16C23 21 18 23 11 22" fill="none" stroke="#e08c3c" strokeWidth="2" />
            <text x="5" y="32" fill="#1c1c54" className="font-['Liberation_Sans',sans-serif] text-[11px] font-bold italic">CATIA</text>
        </svg>
    </div>
);

const StatusBar = () => (
    <div className="flex h-[27px] shrink-0 items-center bg-[#d0d0e8] pl-1 text-sm text-[#14141c]">
        <p className="flex-1">Select an object or a command</p>
        <input type="text" aria-label="Power input" className="h-[23px] w-[299px] border-2 border-[#74747c] border-b-white border-r-white bg-white px-1 outline-none" />
        <button type="button" aria-label="Command list" className="flex h-[22px] w-[33px] items-center justify-center border-r border-[#7c7c8c] bg-[#c4c4da]">
            <svg viewBox="0 0 16 14" className="h-3.5 w-4" fill="none" stroke="#7c7c90" aria-hidden="true">
                <path d="M1 2H9V10H1ZM11 12H15V2M11 10H13" />
                <path d="M2 11.5H10.5V3" stroke="#fff" />
            </svg>
        </button>
        <button type="button" aria-label="Help" className="flex h-[22px] w-[31px] items-center justify-center bg-[#c4c4da]">
            <svg viewBox="0 0 16 14" className="h-3.5 w-4" fill="none" stroke="#7c7c90" aria-hidden="true">
                <circle cx="8" cy="6" r="5" />
                <path d="M7 4H9M8 4V9M6 9H10M1 12H15V3" />
            </svg>
        </button>
    </div>
);

const TASKS = [
    {
        label: "Firefox",
        frame: true,
        icon: (
            <g>
                <circle cx="20" cy="20" r="18" fill="#2c6cb8" />
                <circle cx="20" cy="14" r="11" fill="#1c4c94" />
                <path d="M3 11C6 8 9 11 13 12C18 11 17 17 13 18C15 25 23 25 26 21C30 17 27 10 31 4C41 13 41 28 30 36C19 42 4 37 2 24C1 19 1 15 3 11Z" fill="#e0682c" />
                <path d="M31 4C40 14 39 26 32 31C36 22 33 14 31 4Z" fill="#f8c83c" />
            </g>
        ),
    },
    {
        label: "Chrome",
        frame: true,
        icon: (
            <g>
                <circle cx="20" cy="20" r="18" fill="#f4c83c" />
                <path d="M20 20L4 12C10 0 30 -2 37 12H20Z" fill="#d8402c" />
                <path d="M4 11C-2 24 6 37 19 38L27 24L13 24Z" fill="#4ca854" />
                <circle cx="20" cy="20" r="8.5" fill="#f4f4f4" />
                <circle cx="20" cy="20" r="6.5" fill="#3c7cd0" />
            </g>
        ),
    },
    {
        label: "Media Player",
        frame: false,
        icon: (
            <g>
                <path d="M12 5H36V35H12Z" fill="#4c9cc8" />
                <path d="M8 5H32V35H8Z" fill="#74bcdc" stroke="#c4e4f4" />
                <path d="M4 5H28V35L4 33Z" fill="#a4d4e8" stroke="#e0f4fc" />
                <circle cx="17" cy="20" r="10.5" fill="#e87c34" />
                <path d="M13 14L24 20L13 27Z" fill="#fff" />
            </g>
        ),
    },
    {
        label: "Mouse utility",
        frame: true,
        icon: (
            <g>
                <path d="M20 3C30 6 34 4 38 0C38 12 40 30 27 36C16 39 6 34 1 40C2 28 0 8 20 3Z" fill="#7cc83c" />
                <circle cx="20" cy="20" r="17" fill="#f8f4e4" />
                <circle cx="20" cy="20" r="15" fill="#f0a03c" />
                <rect x="14.5" y="7" width="11" height="25" rx="5.5" fill="#f0f0f0" stroke="#bbb" />
                <path d="M20 10V18" stroke="#999" />
            </g>
        ),
    },
    {
        label: "Explorer",
        frame: true,
        icon: (
            <g>
                <path d="M1 6L12 2L18 5H38V12H1Z" fill="#e0c878" stroke="#a88c44" />
                <path d="M3 4H12V8H3ZM24 5H34V8H24Z" fill="#f8f8f0" />
                <path d="M0 9H40V37H0Z" fill="#f4e09c" stroke="#d8bc6c" />
                <path d="M5 38V26C5 23 7 22 9 22H31C33 22 35 23 35 26V38H28V30H13V38Z" fill="#7cc4ec" stroke="#4c94c4" />
            </g>
        ),
    },
];

const TaskBar = () => (
    <footer className="flex h-[44px] shrink-0 items-stretch overflow-hidden border-t-2 border-[#1c2c0c] bg-[linear-gradient(rgba(190,210,150,0.35)_0,rgba(255,255,255,0)_4px),linear-gradient(90deg,#2c4410_0,#2c4810_20%,#3c5814_36%,#587028_44%,#466420_50%,#5c7428_54%,#4c6c1c_60%,#5c7c2c_68%,#42641c_76%,#547c20_80%,#2c4814_86%,#1c2c14_91%,#3c4818_95%,#1c2810_100%)] pl-2">
        <button type="button" aria-label="Start" className="flex w-[64px] shrink-0 items-center pl-0.5">
            <svg viewBox="0 0 46 46" className="h-[46px] w-[46px] shrink-0" aria-hidden="true">
                <defs>
                    <radialGradient id="orb" cx="0.5" cy="0.85" r="0.8">
                        <stop offset="0" stopColor="#4cc8f0" />
                        <stop offset="0.5" stopColor="#1c64a0" />
                        <stop offset="1" stopColor="#8cacbc" />
                    </radialGradient>
                </defs>
                <circle cx="23" cy="23" r="21" fill="url(#orb)" stroke="#b4ccd8" strokeWidth="1.5" />
                <path d="M12 15C16 12 19 13 22 15L20 23C17 21 14 21 10 23Z" fill="#e8682c" />
                <path d="M24 16C28 18 31 17 35 15L33 23C29 25 26 25 22 23Z" fill="#8cc83c" />
                <path d="M10 25C14 22 17 23 20 25L18 33C15 31 11 31 8 33Z" fill="#4cacec" />
                <path d="M22 25C26 27 29 27 33 25L31 33C27 35 24 35 20 33Z" fill="#f8cc3c" />
                <path d="M5 20C9 2 37 2 41 20C30 14 16 14 5 20Z" fill="#fff" opacity="0.25" />
            </svg>
        </button>
        <div className="flex shrink-0 gap-1">
            {TASKS.map((task) => (
                <button
                    key={task.label}
                    type="button"
                    aria-label={task.label}
                    className={`flex w-[66px] items-center justify-center ${
                        task.frame ? "border-x border-[#c4ccac] bg-[linear-gradient(115deg,rgba(240,245,225,0.7),rgba(150,165,120,0.35)_50%,rgba(150,165,120,0.3))] shadow-[0_0_0_1px_#1c2c0c]" : ""
                    }`}
                >
                    <svg viewBox="0 0 40 40" className="mt-1 size-[38px] shrink-0" aria-hidden="true">
                        {task.icon}
                    </svg>
                </button>
            ))}
            <button type="button" aria-label="CATIA V5" className="flex w-[66px] items-center justify-center border-x border-[#e4e8d8] bg-[linear-gradient(115deg,rgba(250,252,240,0.85),rgba(200,210,180,0.65))] shadow-[0_0_0_1px_#1c2c0c]">
                <CatiaIcon className="mt-1.5 size-[38px] shrink-0 border-2 border-white" />
            </button>
        </div>
        <div className="ml-auto flex items-center">
            <div className="flex items-center gap-2.5">
                <svg viewBox="0 0 20 20" className="size-5" aria-hidden="true">
                    <path d="M5 13H15L10 8Z" fill="#fff" />
                </svg>
                <svg viewBox="0 0 20 20" className="ml-0.5 size-5" aria-hidden="true">
                    <path d="M2 1H16V19H2Z" fill="#f0b49c" />
                    <path d="M13 2H18V18H13Z" fill="#f4f0ec" stroke="#c48c74" />
                    <rect x="2" y="4" width="11" height="12" fill="#dce8f8" />
                    <text x="2" y="15" fill="#1c4c94" className="font-['Liberation_Sans',sans-serif] text-[12px] font-bold">W</text>
                </svg>
                <svg viewBox="0 0 20 20" className="size-5" aria-hidden="true">
                    <circle cx="10" cy="10" r="10" fill="#f09828" />
                    <circle cx="10" cy="9" r="4.5" fill="none" stroke="#fff" strokeWidth="2.6" />
                    <path d="M14 9C14 13 12 15 8 16" fill="none" stroke="#fff" strokeWidth="1.8" />
                </svg>
                <svg viewBox="0 0 20 20" className="size-5" aria-hidden="true">
                    <circle cx="12" cy="8" r="7" fill="#3c7cd0" />
                    <path d="M8 3C12 0 16 2 18 5L13 10L9 8Z" fill="#8cd0a4" />
                    <path d="M0 8L6 6L12 12L16 10L18 15C10 20 3 18 1 13Z" fill="#2ca044" />
                    <circle cx="5" cy="9" r="1.5" fill="#f0dc3c" />
                </svg>
                <svg viewBox="0 0 20 20" className="size-5" aria-hidden="true">
                    <path d="M10 1C15 2 17 1 19 0C19 6 20 15 14 18C9 20 4 18 1 20C1 14 0 4 10 1Z" fill="#7cc83c" />
                    <circle cx="10" cy="10" r="8" fill="#f8f4dc" />
                    <circle cx="10" cy="10" r="6.5" fill="#f0b474" />
                    <rect x="7.5" y="4.5" width="5" height="11" rx="2.5" fill="#f4f4f4" />
                </svg>
                <svg viewBox="0 0 20 20" className="size-5" aria-hidden="true">
                    <path d="M2 14H4V17H2ZM5 12H7V17H5ZM8 9H10V17H8Z" fill="#fff" />
                    <path d="M11 6H13V17H11ZM14 3H16V17H14Z" fill="#5c6454" stroke="#9ca48c" strokeWidth="0.5" />
                </svg>
            </div>
            <time className="mt-0.5 whitespace-nowrap pl-6 pr-4 text-center text-sm leading-5 text-white">
                10:32 PM
                <br />
                28-Mar-14
            </time>
            <button type="button" aria-label="Show desktop" className="h-full w-2.5 border-l border-[#a4ac8c] bg-[linear-gradient(90deg,#5c6c44,#2c3c1c)]" />
        </div>
    </footer>
);

const App: React.FC = () => {
    return (
        <div className="flex h-screen flex-col overflow-hidden bg-[#d0d0e8] font-['Noto_Sans','Open_Sans',sans-serif]">
            <TitleBar />
            <MenuBar />
            <PropertiesBar />
            <main className="flex min-h-0 flex-1">
                <section className="relative min-w-0 flex-1 border-l-2 border-t-2 border-[#74747c] bg-[#333366]">
                    <Model />
                    <SpecTree />
                </section>
                <SideBar />
            </main>
            <BottomBar />
            <StatusBar />
            <TaskBar />
        </div>
    );
};

export default App;
